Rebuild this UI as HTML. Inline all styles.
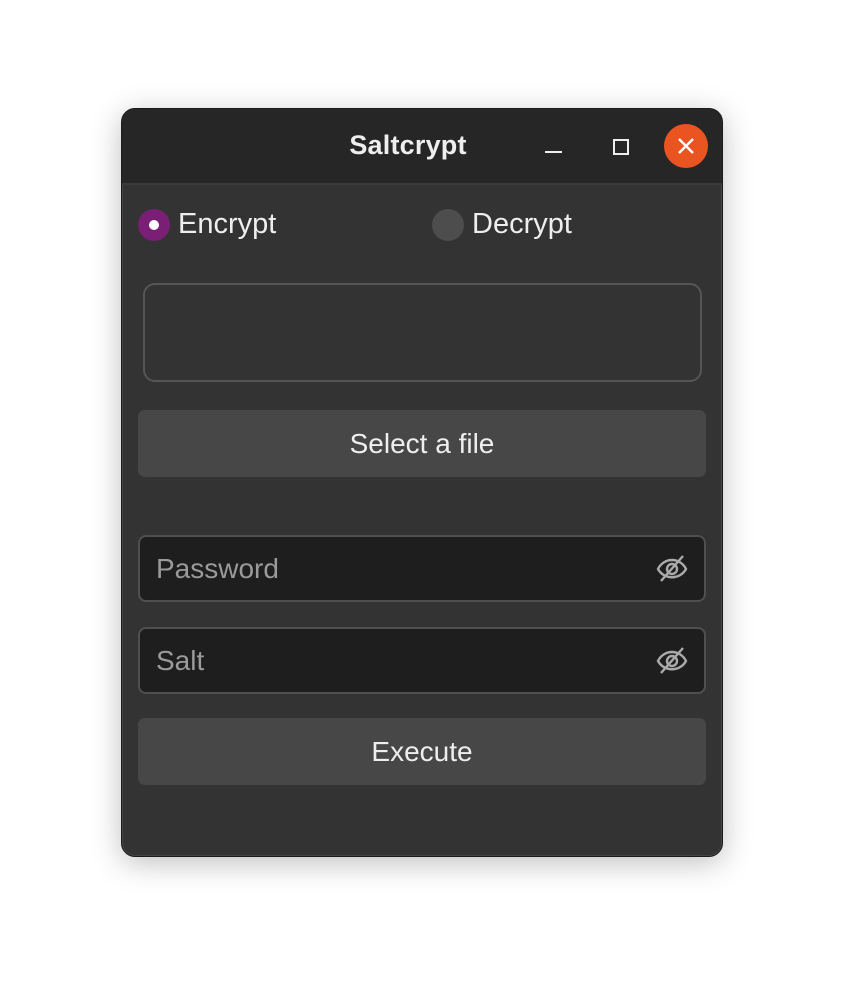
<!DOCTYPE html>
<html><head><style>
body{margin:0;width:844px;height:990px;background:#fff;font-family:"Liberation Sans",sans-serif;position:relative;overflow:hidden}
.win{position:absolute;left:121px;top:108px;width:600px;height:747px;border:1px solid #1a1a1a;border-radius:14px;background:#333;box-shadow:0 6px 30px rgba(0,0,0,.25),inset 0 0 0 1px #444;overflow:hidden}
.tb{position:absolute;left:0;top:0;width:100%;height:74px;background:#262626;border-bottom:2px solid #3a3a3a}
.title{position:absolute;left:0;width:572px;text-align:center;top:21px;font-size:27px;font-weight:bold;color:#eee;letter-spacing:.2px}
.abs{position:absolute}
.t{color:#eee;font-size:29px}
.btn{position:absolute;left:16px;width:568px;height:67px;background:#474747;border-radius:7px;color:#eee;font-size:28px;text-align:center;line-height:67px}
.ent{position:absolute;left:16px;width:564px;height:63px;background:#1e1e1e;border:2px solid #4f4f4f;border-radius:8px;color:#9a9a9a;font-size:28px;line-height:63px;box-sizing:content-box}
.ent span{margin-left:16px}
.ent svg{position:absolute;right:16px;top:17px}
</style></head><body>
<div class="win">
 <div class="tb">
  <div class="title">Saltcrypt</div>
  <div class="abs" style="left:423px;top:42px;width:17px;height:2px;background:#eee"></div>
  <div class="abs" style="left:491px;top:30px;width:12px;height:12px;border:2px solid #eee"></div>
  <div class="abs" style="left:542px;top:15px;width:44px;height:44px;border-radius:50%;background:#e95420"></div>
  <svg class="abs" style="left:555px;top:28px" width="18" height="18"><path d="M2 2L16 16M16 2L2 16" stroke="#fff" stroke-width="2.4"/></svg>
 </div>
 <div class="abs" style="left:16px;top:100px;width:32px;height:32px;border-radius:50%;background:#7a1f75"></div>
 <div class="abs" style="left:27px;top:111px;width:10px;height:10px;border-radius:50%;background:#fff"></div>
 <div class="abs t" style="left:56px;top:99px">Encrypt</div>
 <div class="abs" style="left:310px;top:100px;width:32px;height:32px;border-radius:50%;background:#4d4d4d"></div>
 <div class="abs t" style="left:350px;top:99px">Decrypt</div>
 <div class="abs" style="left:21px;top:174px;width:555px;height:95px;border:2px solid #555;border-radius:12px"></div>
 <div class="btn" style="top:301px">Select a file</div>
 <div class="ent" style="top:426px"><span>Password</span>
  <svg width="32" height="28" viewBox="0 0 32 28"><g fill="none" stroke="#aaa" stroke-width="2.4"><path d="M2 15C8 3 24 3 30 15C24 26 8 26 2 15Z"/><circle cx="16" cy="15" r="5"/><path d="M5 27L27 2"/></g></svg></div>
 <div class="ent" style="top:518px"><span>Salt</span>
  <svg width="32" height="28" viewBox="0 0 32 28"><g fill="none" stroke="#aaa" stroke-width="2.4"><path d="M2 15C8 3 24 3 30 15C24 26 8 26 2 15Z"/><circle cx="16" cy="15" r="5"/><path d="M5 27L27 2"/></g></svg></div>
 <div class="btn" style="top:609px">Execute</div>
</div>
</body></html>
